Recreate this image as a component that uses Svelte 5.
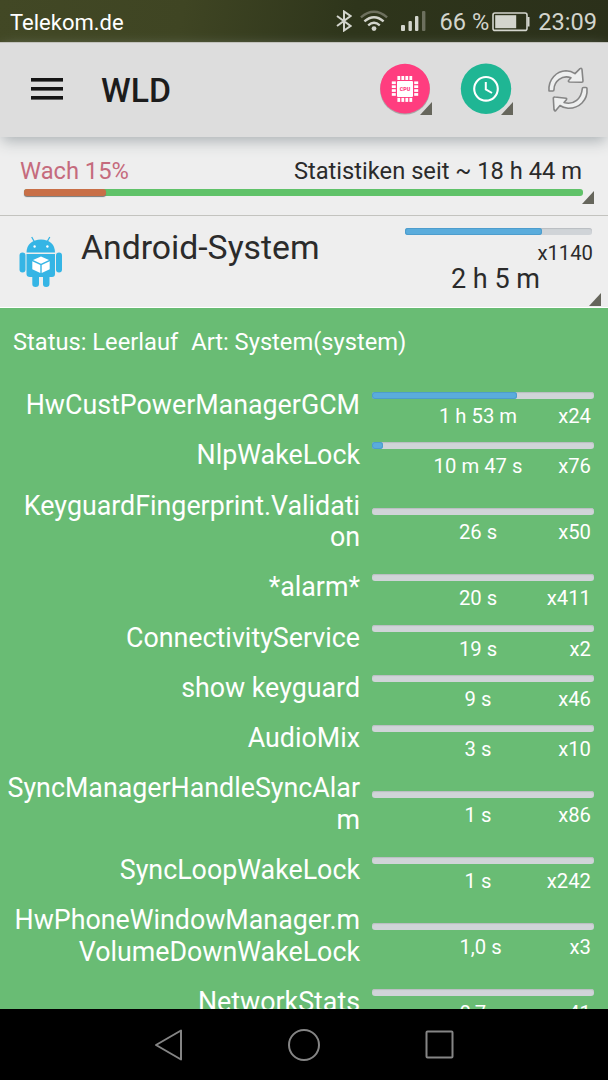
<script>
    let app = {
        name: "Android-System",
        count: "x1140",
        time: "2 h 5 m",
        share: 73
    };

    let wakelocks = [
        { name: "HwCustPowerManagerGCM", time: "1 h 53 m", count: "x24", share: 65.5 },
        { name: "NlpWakeLock", time: "10 m 47 s", count: "x76", share: 5 },
        { name: "KeyguardFingerprint.Validati\non", time: "26 s", count: "x50", share: 0 },
        { name: "*alarm*", time: "20 s", count: "x411", share: 0 },
        { name: "ConnectivityService", time: "19 s", count: "x2", share: 0 },
        { name: "show keyguard", time: "9 s", count: "x46", share: 0 },
        { name: "AudioMix", time: "3 s", count: "x10", share: 0 },
        { name: "SyncManagerHandleSyncAlar\nm", time: "1 s", count: "x86", share: 0 },
        { name: "SyncLoopWakeLock", time: "1 s", count: "x242", share: 0 },
        { name: "HwPhoneWindowManager.m\nVolumeDownWakeLock", time: "\u00a01,0 s", count: "x3", share: 0 },
        { name: "NetworkStats", time: "\u00a00,7 s", count: "x41", share: 0 }
    ];

    let pins = [0, 1, 2, 3];
</script>

<div class="screen">
    <div class="status-bar">
        <span class="carrier">Telekom.de</span>
        <svg class="bluetooth" width="16" height="22" viewBox="0 0 16 22" fill="none" stroke="#d3d5cd" stroke-width="2">
            <path d="M1 6 L14.5 16 L8 20.5 V1.5 L14.5 6 L1 16" />
        </svg>
        <svg class="wifi" width="28" height="22" viewBox="0 0 28 22" fill="none" stroke-width="2.4">
            <path d="M.9 7.3 Q14 -3.6 27.1 7.3" stroke="#6d705e" />
            <path d="M4.4 11.3 Q14 3 23.6 11.3 M8.2 15.3 Q14 10.4 19.8 15.3" stroke="#d3d5cd" />
            <circle cx="14" cy="18.6" r="2.4" fill="#d3d5cd" />
        </svg>
        <svg class="signal" width="26" height="22" viewBox="0 0 26 22" fill="#d3d5cd">
            <rect x="1" y="15" width="4" height="6" rx="1" />
            <rect x="8.5" y="11" width="3.4" height="10" rx="1" />
            <rect x="15" y="6" width="3.4" height="15" rx="1" />
            <rect x="22" y="1" width="3.4" height="20" rx="1" fill="#6d705e" />
        </svg>
        <span class="percent">66 %</span>
        <svg class="battery" width="38" height="20" viewBox="0 0 38 20">
            <rect x="1" y="1" width="34" height="17.4" rx="2" fill="none" stroke="#d3d5cd" stroke-width="1.6" />
            <rect x="3.2" y="3.2" width="21" height="13" fill="#d3d5cd" />
            <path d="M35.5 5 h2 v9.5 h-2z" fill="#d3d5cd" />
        </svg>
        <span class="clock">23:09</span>
    </div>

    <header class="toolbar">
        <svg class="menu" width="32" height="22" viewBox="0 0 32 22" fill="#151515">
            <rect y="0" width="32" height="3.6" />
            <rect y="9" width="32" height="3.6" />
            <rect y="18" width="32" height="3.6" />
        </svg>
        <h1>WLD</h1>

        <div class="action">
            <svg width="52" height="52" viewBox="0 0 52 52">
                <circle cx="26" cy="26.6" r="25" fill="#a9a9a9" />
                <circle cx="26" cy="25.6" r="24.8" fill="#ff3d7f" />
                <rect x="18" y="18" width="16" height="16" rx="1" fill="#fff" />
                {#each pins as pin}
                    <rect x={18.4 + pin * 4} y="13" width="2.8" height="4" fill="#fff" />
                    <rect x={18.4 + pin * 4} y="34.9" width="2.8" height="4" fill="#fff" />
                    <rect x="12.8" y={18.4 + pin * 3.9} width="4" height="2.7" fill="#fff" />
                    <rect x="35.2" y={18.4 + pin * 3.9} width="4" height="2.7" fill="#fff" />
                {/each}
                <text x="26" y="27.9" class="cpu" text-anchor="middle" textLength="10.5" lengthAdjust="spacingAndGlyphs">CPU</text>
            </svg>
            <i class="corner"></i>
        </div>

        <div class="action">
            <svg width="52" height="52" viewBox="0 0 52 52" fill="none">
                <circle cx="26" cy="25.8" r="25.2" fill="#1fb694" />
                <circle cx="26" cy="25.8" r="11.8" stroke="#fff" stroke-width="2.1" />
                <path d="M25.8 19 V26.4 L32 30" stroke="#fff" stroke-width="2" />
            </svg>
            <i class="corner"></i>
        </div>

        <svg class="refresh" width="44" height="48" viewBox="0 0 44 48" fill="#eeefef" stroke="#858585" stroke-width="1.6" stroke-linejoin="round">
            <path d="M3 26 C2 14 11 6 20 5.8 Q25 5.800 29 8.600 L34 3.600 Q35.800 2.600 36 4.600 L37 16 Q37 17.200 35.800 17.200 L23.500 17 Q21.500 16.500 23 15 L25 12.800 C16 9.500 8 16.500 8 24.500 Q8 26 6.800 26 Z" />
            <path d="M36.300 23.500 Q36.300 22.500 37.500 22.500 H40 Q41 22.500 41 23.500 C42 35.500 33 43.500 22 43.200 Q17.500 43 14 40.500 L9.800 45.500 Q8.500 46.500 8 44.500 L7.300 33 Q7.500 31.800 9 32 L20 33.200 Q21.300 33.800 20.200 35 L18 37.500 C28 40.500 35.500 33.500 36.300 23.500 Z" />
        </svg>
    </header>

    <section class="stats">
        <div class="stats-text">
            <span class="awake">Wach 15%</span>
            <span>Statistiken seit ~ 18 h 44 m</span>
        </div>
        <div class="awake-bar"><div style="width: 14.7%"></div></div>
        <i class="corner"></i>
    </section>

    <section class="app">
        <svg class="android" width="44" height="52" viewBox="0 0 44 52" fill="#35b5e5">
            <path d="M7.500 16.500 C7.500 8.500 13.500 3.500 22 3.500 S36 8.500 36 16.500 Z" />
            <path d="M12.700 1 L15.500 6 M30.800 1 L28 6" stroke="#35b5e5" stroke-width="1.300" />
            <path d="M7.500 18 H36 V38 Q36 41 33 41 H30.500 V48 Q30.500 51 27.200 51 T24 48 V41 H20 V48 Q20 51 16.600 51 T13.300 48 V41 H11 Q7.500 41 7.500 38 Z" />
            <rect x=".5" y="16.500" width="6" height="20" rx="3" />
            <rect x="37" y="16.500" width="6" height="20" rx="3" />
            <circle cx="15.600" cy="10.500" r="1.200" fill="#fff" />
            <circle cx="28.400" cy="10.500" r="1.200" fill="#fff" />
            <path d="M22 20.500 L30 24 L22 27.700 L14 24 Z M13.300 25.200 L21.300 28.900 V37 L13.300 33.200 Z M30.700 25.200 L22.700 28.900 V37 L30.700 33.200 Z" fill="#fff" />
        </svg>
        <h2>{app.name}</h2>
        <div class="app-usage">
            <div class="bar"><div style="width: {app.share}%"></div></div>
            <span class="app-count">{app.count}</span>
            <span class="app-time">{app.time}</span>
        </div>
        <i class="corner"></i>
    </section>

    <section class="details">
        <p>
            <span>Status: Leerlauf</span>
            <span>Art: System(system)</span>
        </p>
        {#each wakelocks as lock}
            <div class="row">
                <div class="name">{lock.name}</div>
                <div class="usage">
                    <div class="bar">
                        {#if lock.share}
                            <div style="width: {lock.share}%"></div>
                        {/if}
                    </div>
                    <div class="values">
                        <span class="time">{lock.time}</span>
                        <span class="count">{lock.count}</span>
                    </div>
                </div>
            </div>
        {/each}
    </section>

    <nav>
        <svg width="30" height="36" viewBox="0 0 30 36"><path d="M28 3.500 V32.500 L3 18 Z" /></svg>
        <svg width="34" height="34" viewBox="0 0 34 34"><circle cx="17" cy="17" r="15" /></svg>
        <svg width="30" height="30" viewBox="0 0 30 30"><rect x="1.500" y="1.500" width="26" height="26" rx="1" /></svg>
    </nav>
</div>

<style>
    :global(body) {
        margin: 0;
    }

    .screen {
        display: flex;
        flex-direction: column;
        width: 608px;
        height: 1080px;
        overflow: hidden;
        background: #eee;
        color: #2b2b2b;
        font-family: Roboto, sans-serif;
    }

    .screen * {
        box-sizing: border-box;
    }

    svg {
        display: block;
        flex: none;
    }

    .status-bar {
        display: flex;
        align-items: center;
        flex: none;
        height: 42px;
        padding: 0 11px 0 10px;
        background: linear-gradient(100deg, #424825 0%, #3f4523 30%, #2e351b 58%, #2b301a 100%);
        color: #d3d5cd;
        font-size: 23.6px;
        white-space: nowrap;
    }

    .carrier {
        flex: 1;
        color: #fff;
        font-size: 22px;
        padding-top: 2px;
    }

    .bluetooth {
        margin-right: -1px;
    }

    .wifi {
        margin-left: 9px;
    }

    .signal {
        margin-left: 12px;
    }

    .percent {
        margin-left: 14px;
        padding-top: 2px;
    }

    .battery {
        margin-left: 3px;
        margin-top: 2px;
    }

    .clock {
        margin-left: 8px;
        padding-top: 2px;
    }

    .toolbar {
        position: relative;
        display: flex;
        align-items: center;
        flex: none;
        height: 95px;
        padding: 0 18px 2px 31px;
        border-top: 1px solid #c2c2bd;
        background: #ddd;
        box-shadow: 0 6px 14px -2px #aab0b3;
    }

    h1 {
        flex: 1;
        margin: 3px 0 0 38px;
        color: #1c1c1c;
        font-size: 33.75px;
        font-weight: 500;
    }

    .action {
        position: relative;
        margin-right: 29px;
    }

    .action + .refresh {
        margin: 0 0 0 5px;
    }

    .cpu {
        fill: #ff3d7f;
        font-size: 5.5px;
        font-weight: 900;
    }

    .corner {
        position: absolute;
        width: 12px;
        height: 13px;
        background: #66665c;
        clip-path: polygon(100% 0, 100% 100%, 0 100%);
    }

    .action .corner {
        right: -1px;
        bottom: 0;
    }

    .stats {
        position: relative;
        flex: none;
        height: 79px;
        padding: 20px 26px 0 20px;
        border-bottom: 1px solid #c3c3bf;
    }

    .stats-text {
        display: flex;
        justify-content: space-between;
        font-size: 23.7px;
        line-height: 28px;
    }

    .awake {
        color: #c56b7d;
    }

    .awake-bar {
        height: 7px;
        margin: 4px -1px 0 4px;
        border-radius: 3px;
        background: #60c269;
    }

    .awake-bar div {
        height: 7px;
        border-radius: 3px;
        background: #c86f47;
        box-shadow: 0 1px 1px #777;
    }

    .stats .corner {
        right: 14px;
        bottom: 11px;
    }

    .app {
        position: relative;
        display: flex;
        align-items: flex-start;
        flex: none;
        height: 92px;
        padding-left: 19px;
        border-bottom: 1px solid #fff;
    }

    .android {
        margin-top: 20px;
    }

    h2 {
        flex: 1;
        margin: 12px 0 0 18px;
        font-size: 33.75px;
        font-weight: 400;
        line-height: 40px;
    }

    .app-usage {
        display: flex;
        flex-direction: column;
        width: 187px;
        margin: 12px 16px 0 0;
    }

    .bar {
        height: 7px;
        border-radius: 3px;
        background: #d0d4d8;
        box-shadow: inset 0 1px 1px #b9bdc1;
    }

    .bar div {
        height: 7px;
        border-radius: 3px;
        background: #5aacdc;
        box-shadow: inset 0 0 0 1px #4d9dcd;
    }

    .app-count {
        align-self: flex-end;
        margin: 7px -1px 0 0;
        font-size: 20.25px;
        line-height: 23px;
    }

    .app-time {
        align-self: center;
        margin-top: -2px;
        padding-right: 6px;
        font-size: 27px;
        line-height: 32px;
    }

    .app .corner {
        right: 7px;
        bottom: 1px;
    }

    .details {
        flex: 1;
        min-height: 0;
        overflow: hidden;
        background: #69bc74;
        color: #fff;
    }

    p {
        display: flex;
        gap: 13px;
        margin: 20px 0 30px 13px;
        font-size: 23.7px;
        line-height: 28px;
    }

    .row {
        display: flex;
        align-items: center;
        padding-right: 14px;
    }

    .name {
        width: 360px;
        padding: 4px 0 14.75px 4px;
        font-size: 26.8px;
        line-height: 31.5px;
        text-align: right;
        white-space: pre-line;
    }

    .usage {
        flex: 1;
        margin: 0 0 2px 12px;
    }

    .values {
        display: flex;
        margin-top: 5px;
        font-size: 20.25px;
        line-height: 24px;
    }

    .time {
        width: 212px;
        text-align: center;
    }

    .count {
        flex: 1;
        display: flex;
        justify-content: flex-end;
        width: 0;
        padding-right: 3px;
    }

    nav {
        display: flex;
        align-items: center;
        justify-content: center;
        gap: 104px;
        flex: none;
        height: 71px;
        background: #000;
    }

    nav svg {
        fill: none;
        stroke: #858585;
        stroke-width: 2;
        stroke-linejoin: round;
    }
</style>
